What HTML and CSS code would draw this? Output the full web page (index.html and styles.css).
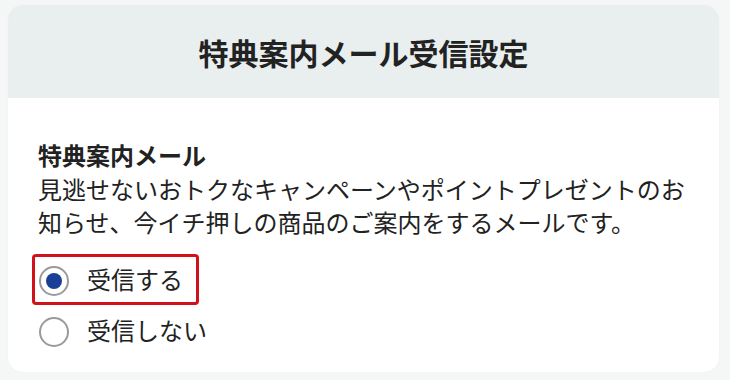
FILE: index.html
```html
<!DOCTYPE html>
<html lang="ja">
<head>
<meta charset="utf-8">
<title>特典案内メール受信設定</title>
<link rel="stylesheet" href="styles.css">
</head>
<body>
<div class="card">
  <div class="card-header">
    <h1 class="card-title">特典案内メール受信設定</h1>
  </div>
  <div class="card-body">
    <h2 class="section-title">特典案内メール</h2>
    <p class="section-text">見逃せないおトクなキャンペーンやポイントプレゼントのお知らせ、今イチ押しの商品のご案内をするメールです。</p>
    <div class="options">
      <label class="option option-highlight">
        <input class="radio" type="radio" name="mail" checked>
        <span class="option-label">受信する</span>
      </label>
      <label class="option">
        <input class="radio" type="radio" name="mail">
        <span class="option-label">受信しない</span>
      </label>
    </div>
  </div>
</div>
</body>
</html>
```

FILE: styles.css
```css
html, body {
  margin: 0;
  padding: 0;
}
body {
  background: #f5f7f7;
  font-family: "Noto Sans CJK JP", "Noto Sans", sans-serif;
  color: #222;
  padding: 5px 11px 8px 8px;
}
.card {
  background: #fff;
  border-radius: 15px;
  overflow: hidden;
  box-shadow: 0 0 2px rgba(0, 0, 0, 0.04);
}
.card-header {
  background: #e9eeee;
  height: 93px;
  display: flex;
  align-items: center;
  justify-content: center;
}
.card-title {
  margin: 0;
  font-size: 30px;
  font-weight: 700;
  line-height: 1.2;
  color: #222;
}
.card-body {
  padding: 40px 30px 16px 30px;
}
.section-title {
  margin: 0;
  font-size: 24px;
  font-weight: 700;
  line-height: 33.6px;
}
.section-text {
  margin: 0;
  font-size: 24px;
  line-height: 33.6px;
}
.options {
  margin: 15px 0 0 -6px;
  display: flex;
  flex-direction: column;
  align-items: flex-start;
}
.option {
  display: flex;
  align-items: center;
  gap: 18px;
  border: 3px solid transparent;
  border-radius: 4px;
  padding: 4px 13px 5px 4px;
  font-size: 24px;
  line-height: 36px;
}
.option-highlight {
  border-color: #d2121b;
}
.radio {
  appearance: none;
  -webkit-appearance: none;
  margin: 4px 0 0 0;
  width: 30px;
  height: 30px;
  border: 2px solid #9a9a9a;
  border-radius: 50%;
  background: #fff;
  display: grid;
  place-items: center;
  box-sizing: border-box;
}
.radio:checked::before {
  content: "";
  width: 16px;
  height: 16px;
  border-radius: 50%;
  background: #1a3f96;
}
```
